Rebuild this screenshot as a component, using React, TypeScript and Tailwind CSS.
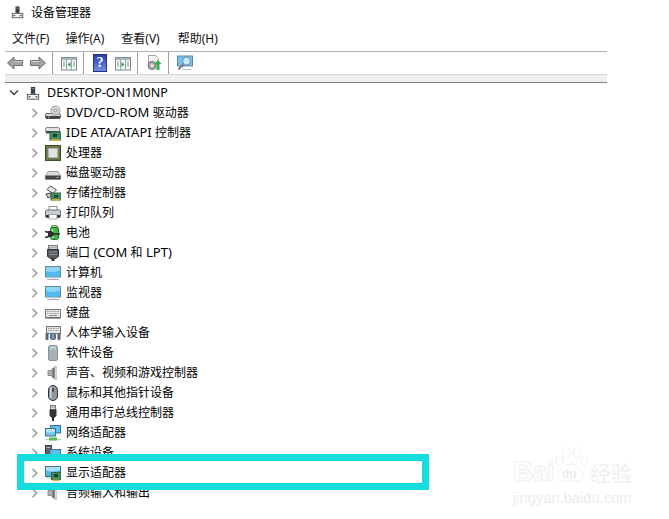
import type { ReactNode } from 'react'

const Svg = ({ children, className = 'w-4 h-4' }: { children: ReactNode; className?: string }) => (
  <svg viewBox="0 0 16 16" className={`${className} shrink-0`}>
    {children}
  </svg>
)

const Chevron = () => (
  <svg viewBox="0 0 8 10" className="w-2 h-2.5 shrink-0">
    <path d="M1.5 0.8l4.2 4.2-4.2 4.2" fill="none" stroke="#9c9c9c" strokeWidth="1.5" />
  </svg>
)

// 拉丁字符比中文略宽，单独放大
const Label = ({ text }: { text: string }) => (
  <span className="whitespace-nowrap">
    {text.split(/([\x20-\x7e]+)/).map((part, i) =>
      /[\x20-\x7e]/.test(part) ? (
        <span key={i} className="text-[13px] leading-none">{part}</span>
      ) : (
        part
      )
    )}
  </span>
)

const PcIcon = ({ className }: { className?: string }) => (
  <Svg className={className}>
    <rect x="5.5" y="0.5" width="5" height="8" fill="#3a3f45" />
    <rect x="6.5" y="2" width="3" height="1" fill="#8d949b" />
    <rect x="1.5" y="9" width="13" height="5.5" fill="#f2f2f2" stroke="#4a4a4a" />
    <rect x="3" y="11" width="2" height="1.5" fill="#444" />
    <rect x="11" y="11" width="2" height="1.5" fill="#444" />
  </Svg>
)

const DiscIcon = () => (
  <Svg>
    <rect x="0.5" y="8.5" width="15" height="5" rx="1.5" fill="#d8d8d8" stroke="#6d6d6d" />
    <rect x="1" y="11" width="14" height="2.5" fill="#3f3f3f" />
    <rect x="3" y="11.5" width="2" height="1" fill="#6fdc4d" />
    <circle cx="10.5" cy="5.5" r="4.5" fill="#d4d4d4" stroke="#9d9d9d" />
    <circle cx="10.5" cy="5.5" r="1.3" fill="#fff" stroke="#8a8a8a" />
  </Svg>
)

const IdeIcon = () => (
  <Svg>
    <rect x="0.5" y="2.5" width="14" height="5" rx="1.5" fill="#e0e0e0" stroke="#8a8a8a" />
    <rect x="1" y="6" width="13" height="2.5" fill="#454545" />
    <rect x="5" y="7" width="11" height="8" fill="#3f8f63" stroke="#2b6a46" />
    <rect x="8" y="9" width="4" height="3" fill="#1d3e2b" />
    <rect x="6" y="14" width="9" height="1.5" fill="#d9a92f" />
  </Svg>
)

const CpuIcon = () => (
  <Svg>
    <rect x="0.5" y="0.5" width="15" height="15" fill="#496a3f" stroke="#2d4a2b" />
    <rect x="3" y="3" width="10" height="10" fill="#e0e3dd" stroke="#7d8a77" />
    <path d="M2 0.5v15M5 0.5v2M8 0.5v2M11 0.5v2M14 0.5v15M5 13.5v2M8 13.5v2M11 13.5v2" stroke="#b5a24a" strokeWidth="0.6" />
  </Svg>
)

const DiskIcon = () => (
  <Svg>
    <path d="M3 6.5h10l2.5 4v3.5h-15v-3.5z" fill="#dcdcdc" stroke="#9a9a9a" />
    <rect x="0.5" y="10.5" width="15" height="4" fill="#434343" />
    <rect x="11.5" y="11.8" width="2" height="1.2" fill="#69d94b" />
  </Svg>
)

const StorageIcon = () => (
  <Svg>
    <path d="M5.5 1l6 4-3.5 3.5-6-4z" fill="#e8e8e8" stroke="#4a4a4a" />
    <path d="M1 9l4-1 2 3-4 2z" fill="#c9c9c9" stroke="#4a4a4a" />
    <rect x="6" y="8" width="10" height="7" fill="#3f8f63" stroke="#2b6a46" />
    <rect x="9" y="10" width="4" height="2.5" fill="#1d3e2b" />
    <rect x="7" y="14" width="8" height="1.5" fill="#d9a92f" />
  </Svg>
)

const PrinterIcon = () => (
  <Svg>
    <rect x="4" y="1.5" width="8" height="4" fill="#fff" stroke="#8f8f8f" />
    <rect x="0.5" y="5" width="15" height="7.5" rx="1" fill="#c9ced2" stroke="#6f7377" />
    <rect x="1" y="10" width="14" height="2.5" fill="#2f3235" />
    <rect x="4" y="9.5" width="8" height="4.5" fill="#fbfbfb" stroke="#777" strokeWidth="0.6" />
  </Svg>
)

const BatteryIcon = () => (
  <Svg>
    <ellipse cx="9.5" cy="2.5" rx="3.5" ry="2" fill="#aee6a0" stroke="#3b7d36" />
    <rect x="5.5" y="2.5" width="8" height="12" rx="2" fill="#3fb34a" stroke="#2a6e2d" />
    <rect x="6.5" y="4" width="2" height="9" fill="#a5e79a" />
    <path d="M0 6.5l4 1M0 12.5l4-1" stroke="#222" strokeWidth="1.4" />
    <path d="M3 6h3.5l4 3-4 3h-3.5z" fill="#2d2d2d" />
    <path d="M10 9h5" stroke="#222" strokeWidth="1.4" />
  </Svg>
)

const PortIcon = () => (
  <Svg>
    <rect x="3.5" y="0.5" width="9" height="4" fill="#e6e6e6" stroke="#7a7a7a" />
    <path d="M5 1.5v2M7 1.5v2M9 1.5v2M11 1.5v2" stroke="#777" />
    <path d="M2.5 4.5h11v7l-3 2h-5l-3-2z" fill="#555a5f" stroke="#33363a" />
    <path d="M4 7h8M4 9.5h8" stroke="#8a9096" />
    <rect x="6.5" y="13" width="3" height="3" fill="#2d2f32" />
  </Svg>
)

const MonitorIcon = () => (
  <Svg>
    <rect x="0.5" y="1.5" width="15" height="10.5" fill="#4fb6ea" stroke="#6b8596" />
    <rect x="1" y="2" width="14" height="9.5" fill="#4fbcf0" />
    <path d="M1 2h14v3.5q-6 2.5-14 .5z" fill="#8dd6f7" />
    <rect x="5.5" y="12" width="5" height="1.5" fill="#c3c8cc" />
    <rect x="2" y="14" width="12" height="1" fill="#a9b0b5" />
  </Svg>
)

const KeyboardIcon = () => (
  <Svg>
    <rect x="0.5" y="4.5" width="15" height="8" fill="#e8e8e8" stroke="#777" />
    <path d="M2 6.5h12M2 8.5h12" stroke="#9a9a9a" strokeDasharray="1 0.6" />
    <path d="M4 10.5h8" stroke="#8a8a8a" />
    <rect x="0.5" y="12.5" width="15" height="1" fill="#555" />
  </Svg>
)

const HidIcon = () => (
  <Svg>
    <rect x="1.5" y="1.5" width="14" height="7" fill="#e4e4e4" stroke="#777" />
    <path d="M3 3.5h11M3 5.5h11" stroke="#999" strokeDasharray="1 0.6" />
    <rect x="0.5" y="8" width="3" height="7" rx="1" fill="#5f6468" />
    <rect x="12.5" y="8" width="3" height="7" rx="1" fill="#5f6468" />
    <rect x="5" y="8" width="6" height="7" rx="2.5" fill="#4a6f96" />
    <rect x="7.5" y="9" width="1" height="5" fill="#c6d3e0" />
  </Svg>
)

const SoftwareIcon = () => (
  <Svg>
    <path d="M3.5 1.5l1-1h7l1 1v13l-1 1h-7l-1-1z" fill="#a7b0b6" stroke="#8a9298" />
    <rect x="5" y="1.5" width="6" height="3" fill="#ccd3d8" />
    <circle cx="8" cy="4" r="0.9" fill="#3dd0d8" />
  </Svg>
)

const SoundIcon = () => (
  <Svg>
    <path d="M3 5.5h3l5-4.5v14l-5-4.5h-3z" fill="#a9adb0" stroke="#8b8f92" />
    <path d="M8.5 3v10" stroke="#6d7174" strokeWidth="2" />
    <rect x="10" y="1.5" width="1.5" height="13" fill="#d6d8da" />
  </Svg>
)

const MouseIcon = () => (
  <Svg>
    <rect x="3.5" y="0.5" width="9" height="15" rx="4.5" fill="#8f99a3" stroke="#2e3236" />
    <rect x="5" y="1.5" width="1.5" height="12" rx="0.7" fill="#d0d6db" />
    <rect x="7.3" y="3" width="1.6" height="4" rx="0.8" fill="#2e3236" />
  </Svg>
)

const UsbIcon = () => (
  <Svg>
    <rect x="5.5" y="0.5" width="5" height="4" fill="#e8e8e8" stroke="#777" />
    <rect x="6.7" y="1.6" width="1" height="1" fill="#444" />
    <rect x="8.4" y="1.6" width="1" height="1" fill="#444" />
    <path d="M4.5 4.5h7v6l-1.5 2h-4l-1.5-2z" fill="#33363a" />
    <rect x="7" y="12" width="2" height="4" fill="#222" />
  </Svg>
)

const NetworkIcon = () => (
  <Svg>
    <rect x="5.5" y="0.5" width="10" height="7.5" fill="#5fc1f0" stroke="#3f6f8f" />
    <rect x="0.5" y="3.5" width="10" height="7.5" fill="#6cc7f2" stroke="#3f6f8f" />
    <path d="M1 4h9v2.5q-4 1.5-9 .5z" fill="#b5e5f9" />
    <path d="M0 14.5h16" stroke="#c8cdd0" strokeWidth="1.5" />
    <rect x="4" y="12.5" width="8" height="3" fill="#57bd4e" />
  </Svg>
)

const SystemIcon = () => (
  <Svg>
    <rect x="0.5" y="0.5" width="6" height="13" fill="#5b6166" stroke="#3a3f43" />
    <rect x="1.5" y="2" width="4" height="1" fill="#b7bcc0" />
    <rect x="5" y="4.5" width="10.5" height="8" fill="#5fc1f0" stroke="#3f6f8f" />
    <rect x="7" y="13" width="7" height="1.5" fill="#b5bbc0" />
  </Svg>
)

const DisplayIcon = () => (
  <Svg>
    <rect x="0.5" y="1.5" width="15" height="10" fill="#4fb6ea" stroke="#4e6f85" />
    <path d="M1 2h14v3q-6 2.5-14 .5z" fill="#a8e0f8" />
    <rect x="1" y="12.5" width="6" height="1" fill="#b5bbc0" />
    <rect x="6.5" y="7.5" width="9.5" height="7" fill="#3f8f63" stroke="#2b6a46" />
    <rect x="9" y="9" width="4" height="3" fill="#1d3e2b" />
    <rect x="7.5" y="14.5" width="7" height="1.5" fill="#d9a92f" />
  </Svg>
)

const treeItems: { label: string; icon: ReactNode }[] = [
  { label: 'DVD/CD-ROM 驱动器', icon: <DiscIcon /> },
  { label: 'IDE ATA/ATAPI 控制器', icon: <IdeIcon /> },
  { label: '处理器', icon: <CpuIcon /> },
  { label: '磁盘驱动器', icon: <DiskIcon /> },
  { label: '存储控制器', icon: <StorageIcon /> },
  { label: '打印队列', icon: <PrinterIcon /> },
  { label: '电池', icon: <BatteryIcon /> },
  { label: '端口 (COM 和 LPT)', icon: <PortIcon /> },
  { label: '计算机', icon: <MonitorIcon /> },
  { label: '监视器', icon: <MonitorIcon /> },
  { label: '键盘', icon: <KeyboardIcon /> },
  { label: '人体学输入设备', icon: <HidIcon /> },
  { label: '软件设备', icon: <SoftwareIcon /> },
  { label: '声音、视频和游戏控制器', icon: <SoundIcon /> },
  { label: '鼠标和其他指针设备', icon: <MouseIcon /> },
  { label: '通用串行总线控制器', icon: <UsbIcon /> },
  { label: '网络适配器', icon: <NetworkIcon /> },
  { label: '系统设备', icon: <SystemIcon /> },
  { label: '显示适配器', icon: <DisplayIcon /> },
  { label: '音频输入和输出', icon: <SoundIcon /> },
]

const ArrowIcon = ({ flip }: { flip?: boolean }) => (
  <svg viewBox="0 0 16 14" className={`w-4 h-3.5 shrink-0 ${flip ? '-scale-x-100' : ''}`}>
    <path d="M0.5 7l6.5-6v3.5h8.5v5h-8.5v3.5z" fill="#a3a3a3" stroke="#6f6f6f" />
    <path d="M7 5.5h8" stroke="#d2d2d2" />
  </svg>
)

const PanelIcon = ({ arrowLeft }: { arrowLeft?: boolean }) => (
  <Svg>
    <rect x="0.5" y="2.5" width="15" height="12.5" fill="#f3f5f6" stroke="#7d8a92" />
    <rect x="1" y="3" width="14" height="2" fill="#aab6bd" />
    <path d="M5.5 5v10M10.5 5v10" stroke="#9aa6ad" />
    <path d="M2 7h2M2 9h2M2 11h2M12 7h2M12 9h2M12 11h2" stroke="#8f9aa0" />
    <path d={arrowLeft ? 'M9.5 7v5l-3-2.5z' : 'M6.5 7v5l3-2.5z'} fill="#2faa3c" />
  </Svg>
)

const Separator = () => <div className="w-px h-[22px] bg-[#a0a0a0] shrink-0" />

export default function App() {
  return (
    <div className="relative w-[669px] h-[519px] bg-white overflow-hidden text-[12px] leading-5 text-black font-['Noto_Sans','Noto_Sans_CJK_SC',sans-serif]">
      {/* 标题和菜单 */}
      <div className="w-[602px] ml-[5px]">
        <div className="h-[25px] flex items-center gap-[7px] pl-[6px]">
          <PcIcon className="w-[13px] h-[15px]" />
          <span>设备管理器</span>
        </div>
        <div className="h-[26px] pl-[7px] pt-[4px] flex text-[#111]">
          <span>文件(F)</span>
          <span className="ml-[16px]">操作(A)</span>
          <span className="ml-[17px]">查看(V)</span>
          <span className="ml-[18px]">帮助(H)</span>
        </div>

        {/* 工具栏 */}
        <div className="h-[23px] border-t border-[#adb0b8] flex items-center pl-[2px]">
          <div className="flex items-center gap-[7px]">
            <ArrowIcon />
            <ArrowIcon flip />
          </div>
          <div className="ml-[6px] mr-[8px]"><Separator /></div>
          <PanelIcon arrowLeft />
          <div className="ml-[6px] mr-[9px]"><Separator /></div>
          <div className="w-[14px] h-[18px] flex items-center justify-center bg-gradient-to-b from-[#2b3fa8] to-[#6f8fe8] border border-[#28307a] text-white font-bold text-[14px] leading-none font-['Liberation_Serif',serif]">?</div>
          <div className="ml-[8px]"><PanelIcon /></div>
          <div className="ml-[6px] mr-[8px]"><Separator /></div>
          <Svg>
            <path d="M2.5 0.5h7l3 3v6h-10z" fill="#f5f5f5" stroke="#a3a3a3" />
            <circle cx="6" cy="10.5" r="4" fill="#a9a9a9" stroke="#6f6f6f" />
            <circle cx="6" cy="10.5" r="1.5" fill="#eee" />
            <path d="M12 5l3.5 4h-2v6h-3v-6h-2z" fill="#2fb344" />
          </Svg>
          <div className="ml-[6px] mr-[8px]"><Separator /></div>
          <Svg>
            <rect x="0.5" y="1" width="15" height="10" fill="#6ec6f2" stroke="#5a8aa8" />
            <circle cx="9.5" cy="6" r="4" fill="#c5e9fa" stroke="#7d8a92" />
            <path d="M6.5 9l-5 5.5" stroke="#7d7d7d" strokeWidth="2" />
            <path d="M5 14.5h9" stroke="#b5bbc0" />
          </Svg>
        </div>
        <div className="h-[9px] bg-[#f0f0f0] border-t border-[#d6d6d6] border-b border-b-[#808080]" />
      </div>

      {/* 设备树 */}
      <div className="pl-[9px]">
        <div className="h-5 flex items-center">
          <svg viewBox="0 0 10 8" className="w-2.5 h-2 shrink-0">
            <path d="M1 1.5l4 4 4-4" fill="none" stroke="#404040" strokeWidth="1.4" />
          </svg>
          <div className="ml-[7px]"><PcIcon className="w-[14px] h-[15px]" /></div>
          <span className="ml-[7px] text-[12.5px]">DESKTOP-ON1M0NP</span>
        </div>
        {treeItems.map(item => (
          <div key={item.label} className="h-5 flex items-center pl-[22px]">
            <Chevron />
            <div className="ml-[6px]">{item.icon}</div>
            <div className="ml-[5px]"><Label text={item.label} /></div>
          </div>
        ))}
      </div>

      {/* 高亮框 */}
      <div className="absolute left-[17px] top-[454px] w-[412px] h-[36px] border-[7px] border-[#14dcdc]" />

      {/* 水印 */}
      <div className="absolute left-[513px] top-[447px] w-[120px] text-white opacity-35">
        <div className="flex items-end h-[38px] font-['Liberation_Sans',sans-serif] font-bold">
          <span className="w-[40px] text-[28px] leading-[26px] tracking-[-1px] [-webkit-text-stroke:1px_#d4d4d4]">Bai</span>
          <div className="relative w-[37px] h-[38px] shrink-0">
            <svg viewBox="0 0 36 38" className="w-full h-full">
              <g fill="#fff" stroke="#d4d4d4">
                <ellipse cx="6" cy="14" rx="3.5" ry="5" />
                <ellipse cx="13" cy="6" rx="3.5" ry="5.5" />
                <ellipse cx="23" cy="6" rx="3.5" ry="5.5" />
                <ellipse cx="31" cy="14" rx="3.5" ry="5" />
                <path d="M18 17c5 0 6 4 10 7 4 4 0 11-5 10-3 0-4-1-6-1s-4 2-8 1c-5-1-6-7-3-10 4-3 6-7 12-7z" />
              </g>
            </svg>
            <span className="absolute left-[9px] top-[21px] text-[12px] leading-[12px] text-[#c8c8c8]">du</span>
          </div>
          <span className="text-[21px] leading-[26px] font-normal whitespace-nowrap text-[#cfcfcf] font-['Noto_Sans_CJK_SC',sans-serif]">经验</span>
        </div>
        <div className="mt-[7px] text-[14.7px] leading-[12px] whitespace-nowrap text-[#c8c8c8] font-['Liberation_Sans',sans-serif]">jingyan.baidu.com</div>
      </div>
    </div>
  )
}
